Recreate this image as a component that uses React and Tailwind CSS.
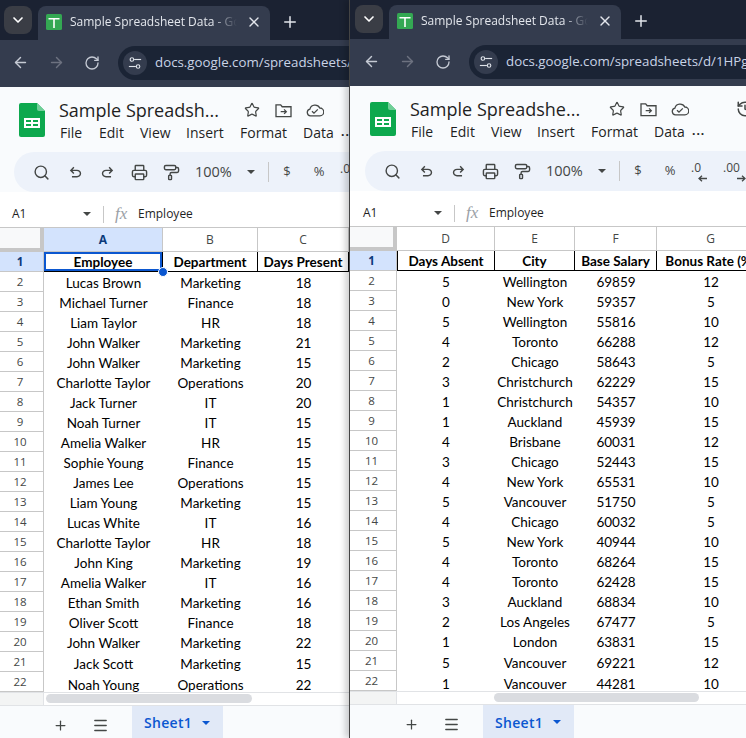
import { ArrowLeft, ArrowRight, RotateCw, Plus, X, ChevronDown, Star, Search, Printer, PaintRoller, Menu, History } from 'lucide-react'

const LEFT_ROWS = [
  ['Employee', 'Department', 'Days Present'],
  ['Lucas Brown', 'Marketing', '18'],
  ['Michael Turner', 'Finance', '18'],
  ['Liam Taylor', 'HR', '18'],
  ['John Walker', 'Marketing', '21'],
  ['John Walker', 'Marketing', '15'],
  ['Charlotte Taylor', 'Operations', '20'],
  ['Jack Turner', 'IT', '20'],
  ['Noah Turner', 'IT', '15'],
  ['Amelia Walker', 'HR', '15'],
  ['Sophie Young', 'Finance', '15'],
  ['James Lee', 'Operations', '15'],
  ['Liam Young', 'Marketing', '15'],
  ['Lucas White', 'IT', '16'],
  ['Charlotte Taylor', 'HR', '18'],
  ['John King', 'Marketing', '19'],
  ['Amelia Walker', 'IT', '16'],
  ['Ethan Smith', 'Marketing', '16'],
  ['Oliver Scott', 'Finance', '18'],
  ['John Walker', 'Marketing', '22'],
  ['Jack Scott', 'Marketing', '15'],
  ['Noah Young', 'Operations', '22'],
]

const RIGHT_ROWS = [
  ['Days Absent', 'City', 'Base Salary', 'Bonus Rate (%)'],
  ['5', 'Wellington', '69859', '12'],
  ['0', 'New York', '59357', '5'],
  ['5', 'Wellington', '55816', '10'],
  ['4', 'Toronto', '66288', '12'],
  ['2', 'Chicago', '58643', '5'],
  ['3', 'Christchurch', '62229', '15'],
  ['1', 'Christchurch', '54357', '10'],
  ['1', 'Auckland', '45939', '15'],
  ['4', 'Brisbane', '60031', '12'],
  ['3', 'Chicago', '52443', '15'],
  ['4', 'New York', '65531', '10'],
  ['5', 'Vancouver', '51750', '5'],
  ['4', 'Chicago', '60032', '5'],
  ['5', 'New York', '40944', '10'],
  ['4', 'Toronto', '68264', '15'],
  ['4', 'Toronto', '62428', '15'],
  ['3', 'Auckland', '68834', '10'],
  ['2', 'Los Angeles', '67477', '5'],
  ['1', 'London', '63831', '15'],
  ['5', 'Vancouver', '69221', '12'],
  ['1', 'Vancouver', '44281', '10'],
]

const MENU = [
  ['File', 'w-[39px]'],
  ['Edit', 'w-[41px]'],
  ['View', 'w-[46px]'],
  ['Insert', 'w-[54px]'],
  ['Format', 'w-[63px]'],
  ['Data', 'w-[39px]'],
]

function SheetsLogo({ className }) {
  return (
    <svg viewBox="0 0 26 34" className={className}>
      <path d="M2 0h16l8 8v24a2 2 0 0 1-2 2H2a2 2 0 0 1-2-2V2a2 2 0 0 1 2-2z" fill="#0da84e" />
      <path d="M18 0l8 8h-6a2 2 0 0 1-2-2z" fill="#6fcf97" />
      <path d="M5 15h16v10H5z M7 17v2h5v-2z M14 17v2h5v-2z M7 21v2h5v-2z M14 21v2h5v-2z" fill="#fff" fillRule="evenodd" />
    </svg>
  )
}

function Favicon() {
  return (
    <svg viewBox="0 0 16 16" className="w-4 h-4 shrink-0">
      <rect width="16" height="16" rx="1.5" fill="#34a853" />
      <path d="M2.5 4h11v1.6H8.8V14H7.2V5.6H2.5z" fill="#fff" />
    </svg>
  )
}

function TuneIcon() {
  return (
    <svg viewBox="0 0 16 16" className="w-[14px] h-[14px] text-[#dfe3ea]" fill="none" stroke="currentColor" strokeWidth="1.3">
      <circle cx="4.5" cy="4" r="2" />
      <path d="M7 4h8" />
      <circle cx="11.5" cy="12" r="2" />
      <path d="M1 12h8" />
    </svg>
  )
}

function FolderIcon() {
  return (
    <svg viewBox="0 0 18 16" className="w-[17px] h-[15px] ml-[15px] shrink-0" fill="none" stroke="#444746" strokeWidth="1.4">
      <path d="M1 2h5l1.6 2H17v10.5H1z" />
      <path d="M6 9.2h6M9.6 6.8l2.4 2.4-2.4 2.4" />
    </svg>
  )
}

function CloudIcon() {
  return (
    <svg viewBox="0 0 18 14" className="w-[18px] h-[14px] ml-[14px] shrink-0" fill="none" stroke="#444746" strokeWidth="1.3">
      <path d="M4.5 12.8a3.4 3.4 0 0 1-.6-6.7A5.3 5.3 0 0 1 13.8 5a3.9 3.9 0 0 1 .1 7.8z" />
      <path d="M6 8.2l2 2 3.8-3.8" />
    </svg>
  )
}

function UndoIcon({ flip }) {
  return (
    <svg viewBox="0 0 24 24" className={`w-[17px] h-[17px] ${flip ? '-scale-x-100' : ''}`} fill="#444746">
      <path d="M7 19v-2h7.1q1.575 0 2.738-1T18 13.5q0-1.5-1.162-2.5T14.1 10H7.8l2.6 2.6L9 14 4 9l5-5 1.4 1.4L7.8 8h6.3q2.425 0 4.163 1.575T20 13.5q0 2.35-1.737 3.925T14.1 19H7z" />
    </svg>
  )
}

function SmallArrow({ flip }) {
  return (
    <svg viewBox="0 0 9 7" className={`absolute top-[13px] right-[-6px] w-[9px] h-[7px] ${flip ? '-scale-x-100' : ''}`} fill="none" stroke="#444746" strokeWidth="1.3">
      <path d="M9 3.5H1M4 .7L1 3.5l3 2.8" />
    </svg>
  )
}

function Caret({ className }) {
  return <span className={`w-0 h-0 border-x-[4px] border-x-transparent border-t-[4px] ${className}`} />
}

function ToolIcon({ children, className = 'w-8' }) {
  return <span className={`${className} shrink-0 flex items-center justify-center text-[#444746]`}>{children}</span>
}

function Tabs({ offset }) {
  return (
    <div className={`flex items-end h-[39px] shrink-0 bg-[#1b2232] ${offset}`}>
      <div className="w-[28px] h-[28px] mb-[6px] ml-[4px] rounded-lg bg-[#3a3d45] flex items-center justify-center shrink-0">
        <ChevronDown className="w-4 h-4 text-white" strokeWidth={2.5} />
      </div>
      <div className="w-[232px] h-[34px] ml-[6px] rounded-t-lg bg-[#343c4e] flex items-center pl-2 pr-2 pb-[2px] shrink-0">
        <Favicon />
        <span className="ml-2 w-[167px] overflow-hidden whitespace-nowrap text-[12px] text-[#e3e6ec] [mask-image:linear-gradient(to_right,black_85%,transparent)]">
          Sample Spreadsheet Data - Google Sheets
        </span>
        <X className="w-4 h-4 ml-[9px] text-[#e3e6ec] shrink-0" />
      </div>
      <Plus className="w-[18px] h-[18px] mb-[9px] ml-[11px] text-[#e3e6ec] shrink-0" />
    </div>
  )
}

function AddressBar({ offset, url }) {
  return (
    <div className={`flex items-center h-[47px] shrink-0 bg-[#343c4e] pb-[2px] ${offset}`}>
      <ArrowLeft className="w-[17px] h-[17px] ml-[12px] text-[#c5cad4] shrink-0" />
      <ArrowRight className="w-[17px] h-[17px] ml-[19px] text-[#6d7280] shrink-0" />
      <RotateCw className="w-[16px] h-[16px] ml-[19px] text-[#c5cad4] shrink-0" />
      <div className="ml-[18px] h-[34px] flex-1 min-w-0 rounded-l-full bg-[#1b2435] flex items-center pl-[5px]">
        <span className="w-[24px] h-[24px] rounded-full bg-[#343c4e] flex items-center justify-center shrink-0">
          <TuneIcon />
        </span>
        <span className="ml-[8px] text-[13.3px] text-[#c9d3e6] whitespace-nowrap overflow-hidden">
          {url}
        </span>
      </div>
    </div>
  )
}

function DocHeader({ offset, title, titleWidth, extra }) {
  return (
    <div className={`flex h-[65px] shrink-0 bg-[#f9fbfd] ${offset}`}>
      <SheetsLogo className="w-[26px] h-[34px] ml-[19px] mt-[16px] shrink-0" />
      <div className="ml-[14px] pt-[11px] shrink-0">
        <div className="flex items-center h-[24px]">
          <span className={`${titleWidth} text-[18px] text-[#1f1f1f] whitespace-nowrap`}>{title}</span>
          <Star className="w-[16px] h-[16px] text-[#444746] shrink-0" strokeWidth={1.8} />
          <FolderIcon />
          <CloudIcon />
          {extra}
        </div>
        <div className="flex items-center h-[22px] -mt-px text-[14px] text-[#1f1f1f]">
          {MENU.map(([label, width]) => (
            <span key={label} className={`${width} pl-px shrink-0`}>{label}</span>
          ))}
          <span className="font-bold text-[12px] tracking-[1px]">...</span>
        </div>
      </div>
    </div>
  )
}

function Toolbar({ offset, showExtra }) {
  return (
    <div className={`h-[40px] shrink-0 bg-[#f9fbfd] ${offset}`}>
      <div className="ml-[14px] h-full rounded-l-full bg-[#edf2fa] flex items-center pl-[11px] text-[#444746]">
        <ToolIcon><Search className="w-[17px] h-[17px]" /></ToolIcon>
        <ToolIcon className="w-8 ml-[2px]"><UndoIcon /></ToolIcon>
        <ToolIcon><UndoIcon flip /></ToolIcon>
        <ToolIcon><Printer className="w-[17px] h-[17px]" /></ToolIcon>
        <ToolIcon><PaintRoller className="w-[17px] h-[17px]" /></ToolIcon>
        <span className="ml-[8px] w-[50px] text-[14.5px] shrink-0">100%</span>
        <Caret className="ml-[2px] border-t-[#444746] shrink-0" />
        <span className="ml-[13px] w-px h-[20px] bg-[#c7c7c7] shrink-0" />
        <span className="ml-[11px] w-[14px] text-[13px] text-center shrink-0">$</span>
        <span className="ml-[17px] w-[16px] text-[13px] text-center shrink-0">%</span>
        <span className="ml-[13px] text-[12px] font-medium shrink-0 leading-none relative -mt-[7px]">
          .0
          {showExtra && <SmallArrow />}
        </span>
        {showExtra && (
          <span className="ml-[22px] text-[12px] font-medium shrink-0 leading-none relative -mt-[7px]">
            .00
            <SmallArrow flip />
          </span>
        )}
      </div>
    </div>
  )
}

function FormulaBar({ offset }) {
  return (
    <div className={`flex items-center h-[36px] pt-[9px] shrink-0 bg-white border-b border-[#c7c7c7] ${offset}`}>
      <span className="ml-[12px] w-[71px] text-[12px] text-[#1f1f1f] shrink-0">A1</span>
      <Caret className="border-t-[#444746] shrink-0" />
      <span className="ml-[12px] w-px h-[17px] bg-[#c7c7c7] shrink-0" />
      <span className="ml-[11px] w-[23px] text-[17px] italic text-[#9aa0a6] font-['Liberation_Serif',serif] shrink-0">fx</span>
      <span className="text-[12px] text-[#1f1f1f] whitespace-nowrap">Employee</span>
    </div>
  )
}

function RowHeader({ width, n, active }) {
  return (
    <div
      className={`${width} shrink-0 h-[20px] flex items-center justify-center pr-[3px] border-b border-r border-[#c7c7c7] text-[11.5px] ${
        active ? 'bg-[#d3e3fd] font-bold text-[#0b3a7a]' : 'bg-white text-[#444746]'
      }`}
    >
      {n}
    </div>
  )
}

function rowPadding(r) {
  if (r === 21) return 'pt-[6px]'
  if (r === 20) return 'pt-[4px]'
  return 'pt-[2px]'
}

function Grid({ rowHeaderWidth, cols, rows, selected, firstBorder }) {
  return (
    <div className="overflow-hidden shrink-0 bg-white">
      <div className="flex h-[24px]">
        <div className={`${rowHeaderWidth} shrink-0 bg-[#f8f9fa] border-r-[4px] border-b-[4px] border-[#c7c7c7]`} />
        {cols.map((col, i) => (
          <div
            key={col.name}
            className={`${col.width} shrink-0 flex items-center justify-center border-r border-b border-[#c7c7c7] text-[12px] ${
              selected && i === 0 ? 'bg-[#d3e3fd] font-bold text-[#0b3a7a]' : 'bg-white text-[#444746]'
            }`}
          >
            {col.name}
          </div>
        ))}
      </div>
      {rows.map((row, r) => (
        <div key={r} className="flex h-[20px]">
          <RowHeader width={rowHeaderWidth} n={r + 1} active={r === 0} />
          {row.map((cell, c) => (
            <div
              key={c}
              className={`${cols[c].width} shrink-0 h-[20px] flex items-center justify-center whitespace-nowrap relative text-[13.5px] text-black font-['Lato',sans-serif] ${
                r === 0 ? 'font-bold border-r border-b border-black' : ''
              } ${r === 0 && c === 0 && firstBorder ? 'border-l' : ''} ${rowPadding(r)}`}
            >
              {cell}
              {selected && r === 0 && c === 0 && (
                <>
                  <span className="absolute inset-0 border-2 border-[#0b57d0]" />
                  <span className="absolute -right-[6px] -bottom-[6px] w-[10px] h-[10px] rounded-full bg-[#0b57d0] border border-white z-10" />
                </>
              )}
            </div>
          ))}
        </div>
      ))}
    </div>
  )
}

function BottomBars({ rowHeaderWidth, offset, thumb }) {
  return (
    <>
      <div className="flex h-[13px] shrink-0 bg-white border-t border-[#e1e3e6]">
        <div className={`${rowHeaderWidth} shrink-0 bg-[#f3f4f4] border-r border-[#e1e3e6]`} />
        <div className={`${thumb} h-[9px] mt-px rounded-full bg-[#dadce0] shrink-0`} />
      </div>
      <div className={`flex flex-1 bg-[#f9fbfd] border-t border-[#e1e3e6] ${offset}`}>
        <Plus className="w-[15px] h-[15px] ml-[53px] mt-[12px] text-[#444746] shrink-0" />
        <Menu className="w-[17px] h-[17px] ml-[24px] mt-[11px] text-[#444746] shrink-0" />
        <div className="ml-[23px] w-[91px] bg-[#e1e9f7] flex items-center pl-[12px] pt-px shrink-0">
          <span className="text-[14px] font-semibold tracking-[0.3px] text-[#0b57d0]">Sheet1</span>
          <Caret className="ml-[10px] border-t-[#0b57d0]" />
        </div>
      </div>
    </>
  )
}

const LEFT_COLS = [
  { name: 'A', width: 'w-[119px]' },
  { name: 'B', width: 'w-[95px]' },
  { name: 'C', width: 'w-[91px]' },
]

const RIGHT_COLS = [
  { name: 'D', width: 'w-[98px]' },
  { name: 'E', width: 'w-[80px]' },
  { name: 'F', width: 'w-[82px]' },
  { name: 'G', width: 'w-[108px]' },
]

export default function App() {
  return (
    <div className="flex w-[746px] h-[738px] overflow-hidden bg-[#1b2232] font-['Open_Sans',sans-serif]">
      <div className="w-[349px] shrink-0 h-full pt-px flex flex-col overflow-hidden">
        <Tabs offset="" />
        <AddressBar offset="" url="docs.google.com/spreadsheets/d/1HPg" />
        <DocHeader offset="" title="Sample Spreadsh..." titleWidth="w-[185px]" />
        <Toolbar offset="" />
        <FormulaBar offset="" />
        <Grid rowHeaderWidth="w-[44px]" cols={LEFT_COLS} rows={LEFT_ROWS} selected />
        <BottomBars rowHeaderWidth="w-[44px]" offset="" thumb="w-[206px] ml-[2px]" />
      </div>
      <div className="w-[397px] shrink-0 h-full flex flex-col overflow-hidden border-l border-[#444] shadow-[-4px_0_6px_rgba(0,0,0,0.18)] z-10 relative">
        <Tabs offset="pl-[1px]" />
        <AddressBar offset="pl-[1px]" url="docs.google.com/spreadsheets/d/1HPg" />
        <DocHeader
          offset="pl-[1px]"
          title="Sample Spreadshe..."
          titleWidth="w-[199px]"
          extra={<History className="w-[18px] h-[18px] ml-[47px] text-[#444746] shrink-0" />}
        />
        <Toolbar offset="pl-[1px]" showExtra />
        <FormulaBar offset="pl-[1px]" />
        <Grid rowHeaderWidth="w-[47px]" cols={RIGHT_COLS} rows={RIGHT_ROWS} firstBorder />
        <BottomBars rowHeaderWidth="w-[47px]" offset="pl-[1px]" thumb="w-[205px] ml-[97px]" />
      </div>
    </div>
  )
}
